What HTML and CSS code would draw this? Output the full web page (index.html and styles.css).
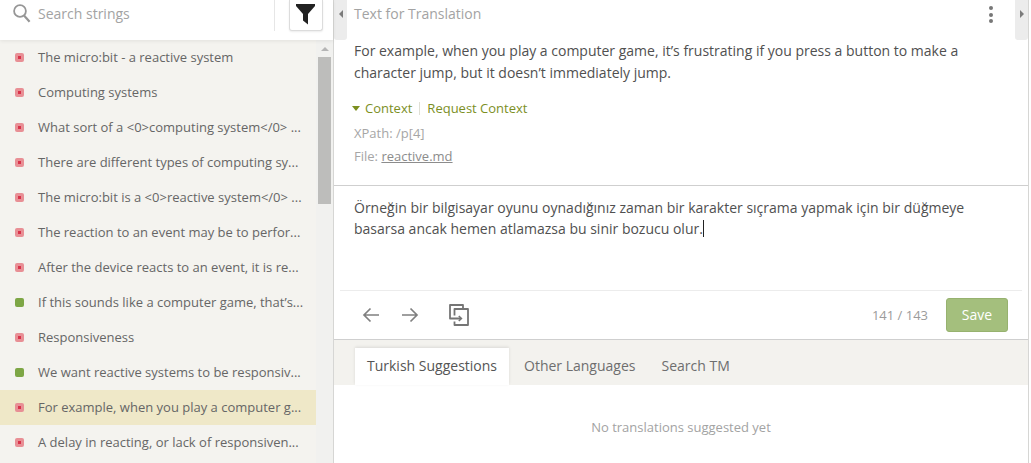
FILE: index.html
```html
<!DOCTYPE html>
<html lang="en">
<head>
    <meta charset="UTF-8">
    <title>Translate</title>
    <link rel="stylesheet" href="styles.css">
</head>
<body>
    <div class="app">
        <div class="sidebar">
            <div class="search-bar">
                <svg class="search-icon" width="18" height="19" viewBox="0 0 18 19">
                    <circle cx="7" cy="7" r="5.9" fill="none" stroke="#969696" stroke-width="1.8"/>
                    <path d="M11 11.6 L16.6 17.8" stroke="#969696" stroke-width="2.2" fill="none"/>
                </svg>
                <span class="search-text">Search strings</span>
                <div class="filter-wrap">
                    <div class="filter-button">
                        <svg width="20" height="21" viewBox="0 0 20 21">
                            <path d="M0 0 H19 V2 L12 10 V20.5 L7 16.5 V10 L0 2 Z" fill="#222"/>
                        </svg>
                    </div>
                </div>
            </div>
            <div class="list-area">
                <div class="strings">
                    <div class="row"><span class="dot todo"></span><span class="label">The micro:bit - a reactive system</span></div>
                    <div class="row"><span class="dot todo"></span><span class="label">Computing systems</span></div>
                    <div class="row"><span class="dot todo"></span><span class="label">What sort of a &lt;0&gt;computing system&lt;/0&gt; ...</span></div>
                    <div class="row"><span class="dot todo"></span><span class="label">There are different types of computing sy...</span></div>
                    <div class="row"><span class="dot todo"></span><span class="label">The micro:bit is a &lt;0&gt;reactive system&lt;/0&gt; ...</span></div>
                    <div class="row"><span class="dot todo"></span><span class="label">The reaction to an event may be to perfor...</span></div>
                    <div class="row"><span class="dot todo"></span><span class="label">After the device reacts to an event, it is re...</span></div>
                    <div class="row"><span class="dot done"></span><span class="label">If this sounds like a computer game, that’s...</span></div>
                    <div class="row"><span class="dot todo"></span><span class="label">Responsiveness</span></div>
                    <div class="row"><span class="dot done"></span><span class="label">We want reactive systems to be responsiv...</span></div>
                    <div class="row selected"><span class="dot todo"></span><span class="label">For example, when you play a computer g...</span></div>
                    <div class="row"><span class="dot todo"></span><span class="label">A delay in reacting, or lack of responsiven...</span></div>
                </div>
                <div class="scrollbar">
                    <span class="scroll-up"></span>
                    <div class="scroll-thumb"></div>
                </div>
            </div>
        </div>
        <div class="main">
            <div class="source">
                <div class="source-head">
                    <div class="collapse-tab"><span class="arrow-left"></span></div>
                    <span class="source-title">Text for Translation</span>
                    <div class="more"><i></i><i></i><i></i></div>
                    <div class="collapse-tab"><span class="arrow-right"></span></div>
                </div>
                <p class="source-text">For example, when you play a computer game, it’s frustrating if you press a button to make a character jump, but it doesn’t immediately jump.</p>
                <div class="context-line">
                    <span class="caret"></span>
                    <span>Context</span>
                    <span class="sep"></span>
                    <span>Request Context</span>
                </div>
                <div class="meta xpath">XPath: /p[4]</div>
                <div class="meta">File: <u>reactive.md</u></div>
            </div>
            <div class="editor">
                <p class="target-text">Örneğin bir bilgisayar oyunu oynadığınız zaman bir karakter sıçrama yapmak için bir düğmeye basarsa ancak hemen atlamazsa bu sinir bozucu olur.<span class="cursor"></span></p>
                <div class="actions">
                    <svg class="nav-icon" width="18" height="16" viewBox="0 0 18 16">
                        <path d="M17 8 H2 M8.5 1.5 L2 8 L8.5 14.5" fill="none" stroke="#808080" stroke-width="1.7"/>
                    </svg>
                    <svg class="nav-icon next" width="18" height="16" viewBox="0 0 18 16">
                        <path d="M1 8 H16 M9.5 1.5 L16 8 L9.5 14.5" fill="none" stroke="#808080" stroke-width="1.7"/>
                    </svg>
                    <svg class="copy-icon" width="20" height="22" viewBox="0 0 20 22">
                        <path d="M14 4.5 V1 H1 V14.5 H12" fill="none" stroke="#757575" stroke-width="1.8" stroke-linejoin="round"/>
                        <path d="M9.8 12 L12.4 14.5 L9.8 17" fill="none" stroke="#757575" stroke-width="1.6"/>
                        <path d="M5.5 11.5 V5 H19 V21 H5.5 V17.5" fill="none" stroke="#757575" stroke-width="1.8" stroke-linejoin="round"/>
                    </svg>
                    <span class="counter">141 / 143</span>
                    <button class="save">Save</button>
                </div>
            </div>
            <div class="tabs">
                <div class="tab active">Turkish Suggestions</div>
                <div class="tab">Other Languages</div>
                <div class="tab">Search TM</div>
            </div>
            <div class="suggestions">No translations suggested yet</div>
        </div>
    </div>
</body>
</html>
```

FILE: styles.css
```css
* {
    box-sizing: border-box;
}
html, body {
    margin: 0;
    padding: 0;
    height: 100%;
    overflow: hidden;
}
body {
    font-family: "Open Sans", sans-serif;
    background: #fff;
    color: #555;
}
.app {
    display: flex;
    width: 1031px;
    height: 463px;
}
.sidebar {
    width: 334px;
    flex: none;
    border-right: 1px solid #d6d6d4;
    display: flex;
    flex-direction: column;
}
.search-bar {
    height: 40px;
    flex: none;
    display: flex;
    align-items: flex-start;
    padding-left: 13px;
    position: relative;
    box-shadow: 0 1px 4px rgba(0, 0, 0, 0.08);
}
.search-icon {
    flex: none;
    margin-top: 4px;
}
.search-text {
    margin-left: 7px;
    margin-top: 4px;
    font-size: 14px;
    line-height: 20px;
    color: #a3a3a3;
}
.filter-wrap {
    margin-left: auto;
    height: 31px;
    border-left: 1px solid #e6e6e6;
    padding-left: 14px;
    margin-right: 10px;
    display: flex;
}
.filter-button {
    width: 34px;
    height: 31px;
    background: #fff;
    border: 1px solid #dcdcdc;
    border-top: none;
    border-radius: 0 0 3px 3px;
    box-shadow: 0 1px 2px rgba(0, 0, 0, 0.08);
    display: flex;
    justify-content: center;
    padding-top: 4px;
}
.list-area {
    flex: 1;
    display: flex;
    min-height: 0;
    background: #f1f1ef;
}
.strings {
    width: 316px;
    flex: none;
    background: #f4f3ef;
    overflow: hidden;
}
.row {
    height: 35px;
    display: flex;
    align-items: center;
    padding-left: 15px;
    font-size: 13px;
    color: #666;
}
.row.selected {
    background: #efe8c8;
}
.dot {
    width: 9px;
    height: 9px;
    flex: none;
    border-radius: 2px;
    margin-right: 14px;
    position: relative;
}
.dot.todo {
    background: #e88f95;
}
.dot.todo::after {
    content: "";
    position: absolute;
    left: 3px;
    top: 3px;
    width: 3px;
    height: 3px;
    background: #d8334a;
}
.dot.done {
    background: #7da645;
}
.label {
    white-space: nowrap;
    padding-bottom: 2px;
}
.scrollbar {
    flex: 1;
    padding: 0 2px 0 2px;
    display: flex;
    flex-direction: column;
    align-items: center;
}
.scroll-up {
    margin-top: 7px;
    width: 0;
    height: 0;
    border-left: 4px solid transparent;
    border-right: 4px solid transparent;
    border-bottom: 4px solid #b5b5b5;
}
.scroll-thumb {
    margin-top: 6px;
    width: 13px;
    height: 147px;
    background: #bdbdbb;
}
.main {
    width: 695px;
    flex: none;
    border-right: 1px solid #d6d6d4;
    display: flex;
    flex-direction: column;
}
.source {
    height: 186px;
    flex: none;
    border-bottom: 1px solid #cfcfcf;
}
.source-head {
    height: 40px;
    display: flex;
    align-items: flex-start;
}
.collapse-tab {
    width: 13px;
    height: 40px;
    flex: none;
    background: #ececec;
    border-radius: 0 0 3px 3px;
    display: flex;
    align-items: center;
    justify-content: center;
    padding-bottom: 12px;
}
.arrow-left {
    width: 0;
    height: 0;
    border-top: 4px solid transparent;
    border-bottom: 4px solid transparent;
    border-right: 4px solid #7b7b7b;
}
.arrow-right {
    width: 0;
    height: 0;
    border-top: 4px solid transparent;
    border-bottom: 4px solid transparent;
    border-left: 4px solid #7b7b7b;
}
.source-title {
    margin-left: 7px;
    margin-top: 4px;
    font-size: 14px;
    line-height: 20px;
    color: #a3a3a3;
}
.more {
    margin-left: auto;
    margin-right: 22px;
    margin-top: 6px;
    display: flex;
    flex-direction: column;
    gap: 2.5px;
}
.more i {
    display: block;
    width: 4px;
    height: 4px;
    border-radius: 50%;
    background: #777;
}
.source-text {
    margin: 0;
    padding: 0 50px 0 20px;
    font-size: 14px;
    line-height: 22px;
    color: #505050;
}
.context-line {
    margin-top: 15px;
    padding-left: 18px;
    display: flex;
    align-items: center;
    font-size: 13px;
    line-height: 18px;
    color: #7c8f1f;
}
.caret {
    width: 0;
    height: 0;
    border-left: 4.5px solid transparent;
    border-right: 4.5px solid transparent;
    border-top: 5px solid #7c8f1f;
    margin-right: 5px;
}
.sep {
    width: 1px;
    height: 13px;
    background: #dfdfd5;
    margin: 0 7px;
}
.meta {
    padding-left: 20px;
    font-size: 13px;
    line-height: 17px;
    margin-top: 6px;
    color: #a6a6a6;
}
.meta.xpath {
    margin-top: 8px;
}
.meta u {
    color: #8c8c8c;
}
.editor {
    height: 154px;
    flex: none;
    border-bottom: 1px solid #cfcfcf;
    display: flex;
    flex-direction: column;
}
.target-text {
    margin: 0;
    height: 104px;
    flex: none;
    padding: 11px 50px 0 20px;
    font-size: 14px;
    line-height: 21px;
    color: #505050;
}
.cursor {
    display: inline-block;
    width: 1px;
    height: 17px;
    background: #222;
    vertical-align: -3px;
}
.actions {
    flex: 1;
    margin: 0 6px;
    border-top: 1px solid #ececec;
    display: flex;
    align-items: center;
    padding-left: 22px;
    padding-right: 14px;
}
.nav-icon.next {
    margin-left: 21px;
}
.copy-icon {
    margin-left: 30px;
}
.counter {
    margin-left: auto;
    font-size: 13px;
    color: #9b9b9b;
}
.save {
    margin-left: 18px;
    width: 62px;
    height: 34px;
    border: 1px solid #97b26f;
    border-radius: 3px;
    background: #a4bf7d;
    color: #fff;
    font-family: inherit;
    font-size: 14px;
    padding: 0 0 2px;
}
.tabs {
    height: 45px;
    flex: none;
    background: #f3f2ee;
    display: flex;
    align-items: flex-end;
    gap: 2px;
    padding-left: 21px;
}
.tab {
    height: 37px;
    padding: 0 12px 2px;
    display: flex;
    align-items: center;
    font-size: 14px;
    color: #6e6e6e;
}
.tab.active {
    background: #fff;
    color: #555;
    margin-right: 1px;
    box-shadow: 0 -1px 3px rgba(0, 0, 0, 0.1);
}
.suggestions {
    flex: 1;
    display: flex;
    align-items: center;
    justify-content: center;
    padding-top: 6px;
    font-size: 13px;
    color: #a3a3a3;
}
```
